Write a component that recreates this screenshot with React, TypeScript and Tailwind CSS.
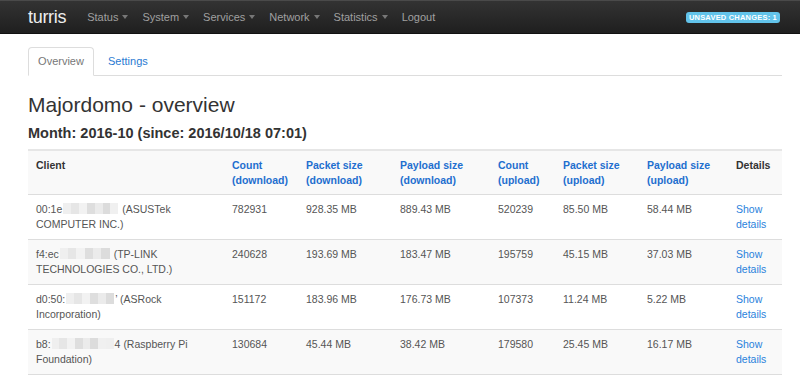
import React from 'react';

const navItems = ['Status', 'System', 'Services', 'Network', 'Statistics'];

type Row = {
  prefix: string;
  blur: number;
  tail: string;
  vendor: string;
  values: string[];
};

const rows: Row[] = [
  { prefix: '00:1e', blur: 55, tail: '', vendor: '(ASUSTek COMPUTER INC.)', values: ['782931', '928.35 MB', '889.43 MB', '520239', '85.50 MB', '58.44 MB'] },
  { prefix: 'f4:ec', blur: 50, tail: '', vendor: '(TP-LINK TECHNOLOGIES CO., LTD.)', values: ['240628', '193.69 MB', '183.47 MB', '195759', '45.15 MB', '37.03 MB'] },
  { prefix: 'd0:50:', blur: 48, tail: '\u2019', vendor: '(ASRock Incorporation)', values: ['151172', '183.96 MB', '176.73 MB', '107373', '11.24 MB', '5.22 MB'] },
  { prefix: 'b8:', blur: 62, tail: '4', vendor: '(Raspberry Pi Foundation)', values: ['130684', '45.44 MB', '38.42 MB', '179580', '25.45 MB', '16.17 MB'] },
];

const headers = [
  ['Count', '(download)'],
  ['Packet size', '(download)'],
  ['Payload size', '(download)'],
  ['Count', '(upload)'],
  ['Packet size', '(upload)'],
  ['Payload size', '(upload)'],
];

const colWidths = [196, 74, 94, 98, 65, 84, 89, 54];

const Caret = () => (
  <span className="ml-[4px] inline-block w-0 h-0 border-l-[3.5px] border-r-[3.5px] border-t-[4px] border-l-transparent border-r-transparent border-t-[#777] align-middle" />
);

// blurred-out part of a MAC address
const Blur = ({ width }: { width: number }) => {
  const shades = ['#efefef', '#e6e6e6', '#f2f2f2', '#dedede', '#ebebeb', '#dcdcdc', '#f0f0f0'];
  const n = Math.max(4, Math.round(width / 8));
  return (
    <span className="inline-flex h-[11px] align-[-1px] mx-[1px]" style={{ width }}>
      {Array.from({ length: n }).map((_, i) => (
        <span key={i} className="flex-1 h-full" style={{ backgroundColor: shades[i % shades.length] }} />
      ))}
    </span>
  );
};

export default function App() {
  return (
    <div className="w-[800px] h-[377px] overflow-hidden bg-white font-['Liberation_Sans',Arial,sans-serif]">
      {/* Navbar */}
      <div className="h-[34px] bg-gradient-to-b from-[#333] to-[#1f1f1f] border-t border-t-[#4a4a4a] border-b border-b-[#111] flex items-center">
        <span className="ml-[28px] text-[18px] text-[#eee] tracking-[-0.3px] leading-none">turris</span>
        <div className="flex items-center ml-[21px] gap-[14px] text-[11px] text-[#a0a0a0]">
          {navItems.map(item => (
            <span key={item} className="flex items-center">
              {item}
              <Caret />
            </span>
          ))}
          <span>Logout</span>
        </div>
        <span className="ml-auto mr-[20px] px-[3px] h-[11px] leading-[11px] rounded-[3px] bg-[#62c3ea] text-white text-[7.5px] font-bold tracking-[0.2px]">
          UNSAVED CHANGES: 1
        </span>
      </div>

      <div className="mx-[28px] w-[754px]">
        {/* Tabs */}
        <div className="mt-[13px] flex border-b border-[#ddd] h-[29px]">
          <div className="w-[66px] h-[29px] border border-[#ddd] border-b-white rounded-t-[4px] bg-white text-[11px] text-[#777] flex items-center justify-center">
            Overview
          </div>
          <div className="ml-[14px] text-[11px] text-[#2a7ad2] flex items-center">Settings</div>
        </div>

        <h2 className="mt-[17px] text-[21px] leading-[24px] text-[#333]">Majordomo - overview</h2>
        <h3 className="mt-[8px] text-[14.5px] leading-[17px] font-bold text-[#333]">Month: 2016-10 (since: 2016/10/18 07:01)</h3>

        {/* Table */}
        <table className="mt-[7px] w-[754px] table-fixed border-collapse text-[10.5px] leading-[15px]">
          <colgroup>
            {colWidths.map((w, i) => (
              <col key={i} style={{ width: w }} />
            ))}
          </colgroup>
          <thead>
            <tr className="bg-[#f9f9f9] border-t-2 border-t-[#e6e6e6] border-b border-b-[#ddd]">
              <th className="px-[8px] pt-[7px] pb-[6px] text-left align-top font-bold text-[#333]">Client</th>
              {headers.map((h, i) => (
                <th key={i} className="px-[8px] pt-[7px] pb-[6px] text-left align-top font-bold text-[#1f6fcf]">
                  {h[0]}
                  <br />
                  {h[1]}
                </th>
              ))}
              <th className="px-[8px] pt-[7px] pb-[6px] text-left align-top font-bold text-[#333]">Details</th>
            </tr>
          </thead>
          <tbody>
            {rows.map((r, i) => (
              <tr key={i} className={`border-b border-[#ddd] ${i % 2 === 1 ? 'bg-[#f9f9f9]' : 'bg-white'}`}>
                <td className="px-[8px] py-[7px] align-top text-[#555]">
                  {r.prefix}
                  <Blur width={r.blur} />
                  {r.tail} {r.vendor}
                </td>
                {r.values.map((v, j) => (
                  <td key={j} className="px-[8px] py-[7px] align-top text-[#555]">{v}</td>
                ))}
                <td className="px-[8px] py-[7px] align-top text-[#2a82dc]">
                  Show
                  <br />
                  details
                </td>
              </tr>
            ))}
          </tbody>
        </table>
      </div>
    </div>
  );
}
